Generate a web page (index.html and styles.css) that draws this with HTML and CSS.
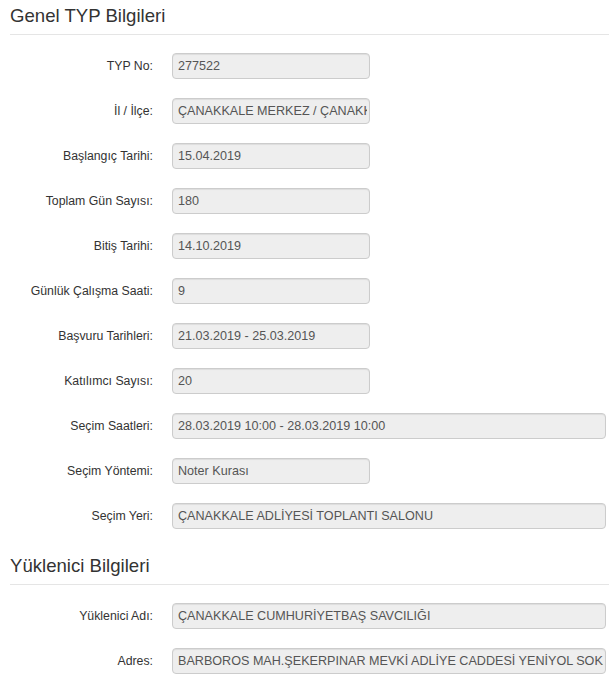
FILE: index.html
```html
<!DOCTYPE html>
<html lang="tr">

<head>
    <meta charset="UTF-8" />
    <meta name="viewport" content="width=device-width, initial-scale=1.0" />
    <title>TYP Bilgileri</title>
    <link rel="stylesheet" href="styles.css">
</head>

<body>
    <div class="page">
        <section class="info-section">
            <h4 class="section-title">Genel TYP Bilgileri</h4>

            <div class="form-group">
                <label for="typNo">TYP No:</label>
                <input type="text" id="typNo" class="field short" value="277522" readonly />
            </div>
            <div class="form-group">
                <label for="ilIlce">İl / İlçe:</label>
                <input type="text" id="ilIlce" class="field short" value="ÇANAKKALE MERKEZ / ÇANAKKALE" readonly />
            </div>
            <div class="form-group">
                <label for="baslangic">Başlangıç Tarihi:</label>
                <input type="text" id="baslangic" class="field short" value="15.04.2019" readonly />
            </div>
            <div class="form-group">
                <label for="gunSayisi">Toplam Gün Sayısı:</label>
                <input type="text" id="gunSayisi" class="field short" value="180" readonly />
            </div>
            <div class="form-group">
                <label for="bitis">Bitiş Tarihi:</label>
                <input type="text" id="bitis" class="field short" value="14.10.2019" readonly />
            </div>
            <div class="form-group">
                <label for="calismaSaati">Günlük Çalışma Saati:</label>
                <input type="text" id="calismaSaati" class="field short" value="9" readonly />
            </div>
            <div class="form-group">
                <label for="basvuru">Başvuru Tarihleri:</label>
                <input type="text" id="basvuru" class="field short" value="21.03.2019 - 25.03.2019" readonly />
            </div>
            <div class="form-group">
                <label for="katilimci">Katılımcı Sayısı:</label>
                <input type="text" id="katilimci" class="field short" value="20" readonly />
            </div>
            <div class="form-group">
                <label for="secimSaat">Seçim Saatleri:</label>
                <input type="text" id="secimSaat" class="field" value="28.03.2019 10:00 - 28.03.2019 10:00" readonly />
            </div>
            <div class="form-group">
                <label for="secimYontem">Seçim Yöntemi:</label>
                <input type="text" id="secimYontem" class="field short" value="Noter Kurası" readonly />
            </div>
            <div class="form-group">
                <label for="secimYeri">Seçim Yeri:</label>
                <input type="text" id="secimYeri" class="field" value="ÇANAKKALE ADLİYESİ TOPLANTI SALONU" readonly />
            </div>
        </section>

        <section class="info-section">
            <h4 class="section-title">Yüklenici Bilgileri</h4>

            <div class="form-group">
                <label for="yukleniciAdi">Yüklenici Adı:</label>
                <input type="text" id="yukleniciAdi" class="field" value="ÇANAKKALE CUMHURİYETBAŞ SAVCILIĞI" readonly />
            </div>
            <div class="form-group">
                <label for="adres">Adres:</label>
                <input type="text" id="adres" class="field" value="BARBOROS MAH.ŞEKERPINAR MEVKİ ADLİYE CADDESİ YENİYOL SOKAK NO:1" readonly />
            </div>
        </section>
    </div>
</body>

</html>
```

FILE: styles.css
```css
body {
    margin: 0;
    font-family: "Liberation Sans", Arial, sans-serif;
    font-size: 12.3px;
    color: #333;
    background: #fff;
}

.page {
    padding-left: 10px;
}

.info-section + .info-section {
    margin-top: 21px;
}

.section-title {
    margin: 0 0 18px;
    padding: 6px 0 8px;
    font-size: 18.6px;
    font-weight: normal;
    line-height: 20px;
    color: #333;
    border-bottom: 1px solid #e5e5e5;
}

.form-group {
    display: grid;
    grid-template-columns: 143px 1fr;
    column-gap: 19px;
    align-items: center;
    margin-bottom: 19px;
    padding-right: 3px;
}

.form-group label {
    text-align: right;
    font-weight: normal;
}

.field {
    box-sizing: border-box;
    width: 100%;
    height: 26px;
    padding: 0 2px 0 5px;
    font-family: inherit;
    font-size: 12.6px;
    color: #555;
    background: #eee;
    border: 1px solid #ccc;
    border-radius: 4px;
    box-shadow: inset 0 1px 1px rgba(0, 0, 0, 0.075);
    outline: none;
}

.field.short {
    width: 198px;
}
```
